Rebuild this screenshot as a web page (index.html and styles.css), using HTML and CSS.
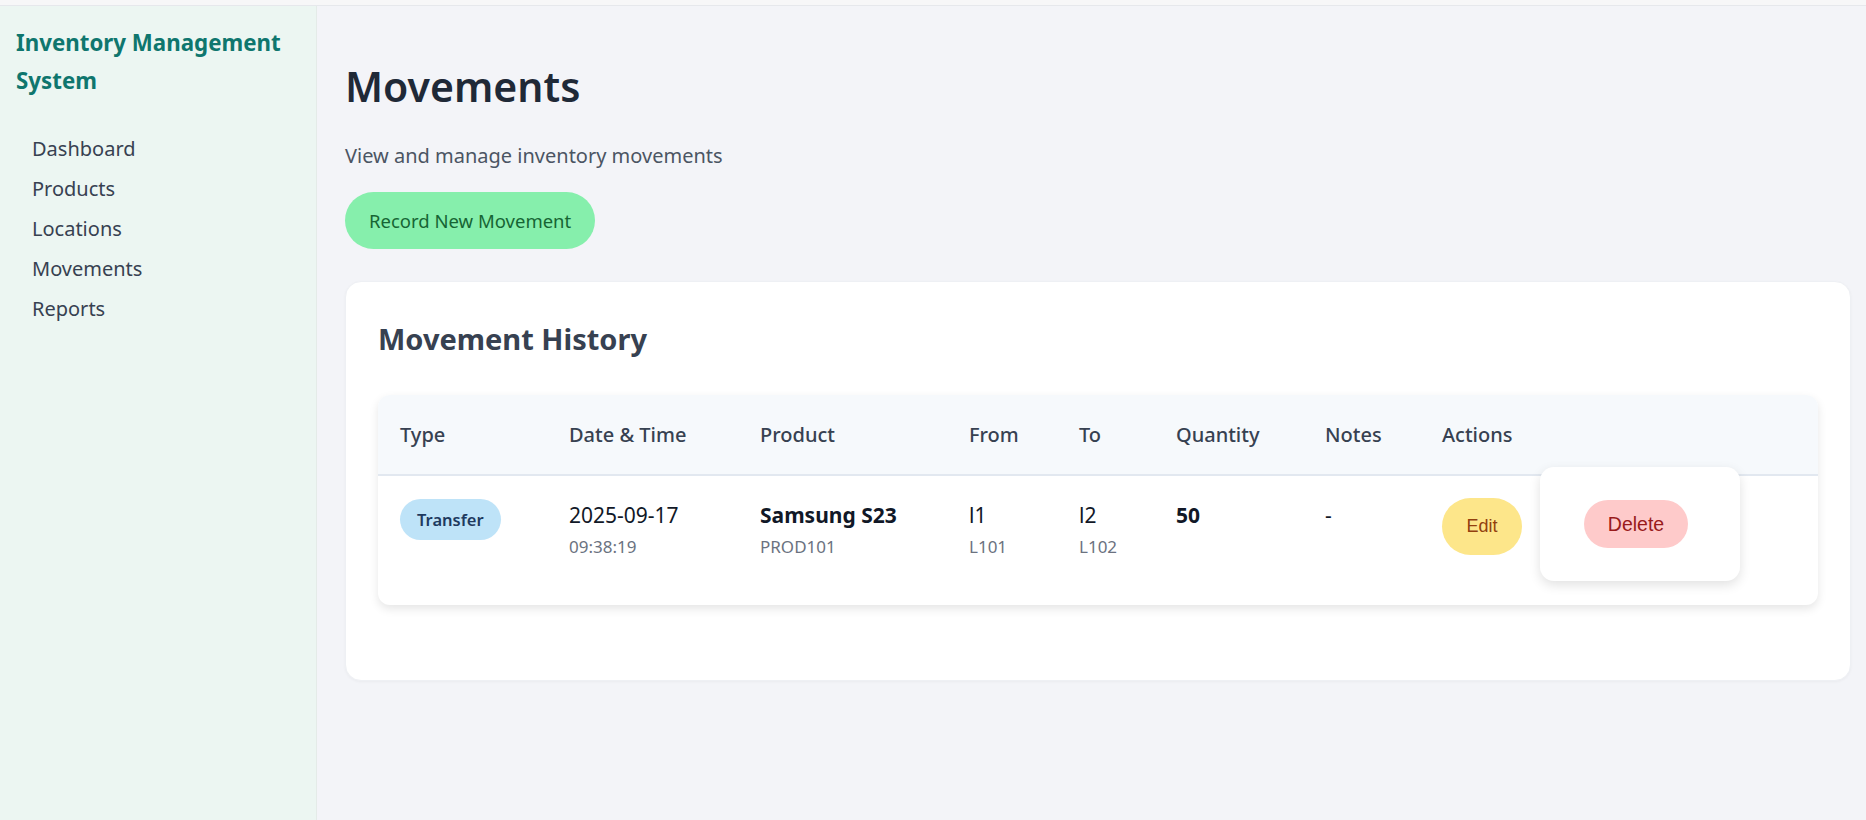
FILE: index.html
```html
<!DOCTYPE html>
<html lang="en">
<head>
<meta charset="utf-8">
<title>Movements - Inventory Management System</title>
<link rel="stylesheet" href="styles.css">
</head>
<body>
<div class="topbar"></div>
<div class="layout">
  <aside class="sidebar">
    <div class="brand">Inventory Management System</div>
    <nav class="nav">
      <a class="nav-link" href="#">Dashboard</a>
      <a class="nav-link" href="#">Products</a>
      <a class="nav-link" href="#">Locations</a>
      <a class="nav-link" href="#">Movements</a>
      <a class="nav-link" href="#">Reports</a>
    </nav>
  </aside>
  <main class="main">
    <h1 class="page-title">Movements</h1>
    <p class="page-sub">View and manage inventory movements</p>
    <button class="btn-record">Record New Movement</button>
    <section class="card">
      <h2 class="card-title">Movement History</h2>
      <div class="table-wrap">
        <table class="table">
          <colgroup>
            <col class="c-type"><col class="c-date"><col class="c-prod"><col class="c-from">
            <col class="c-to"><col class="c-qty"><col class="c-notes"><col class="c-actions">
          </colgroup>
          <thead>
            <tr>
              <th>Type</th><th>Date &amp; Time</th><th>Product</th><th>From</th>
              <th>To</th><th>Quantity</th><th>Notes</th><th>Actions</th>
            </tr>
          </thead>
          <tbody>
            <tr>
              <td><span class="badge">Transfer</span></td>
              <td><div class="main-val">2025-09-17</div><div class="sub-val">09:38:19</div></td>
              <td><div class="main-val strong">Samsung S23</div><div class="sub-val">PROD101</div></td>
              <td><div class="main-val">l1</div><div class="sub-val">L101</div></td>
              <td><div class="main-val">l2</div><div class="sub-val">L102</div></td>
              <td><div class="main-val strong">50</div></td>
              <td><div class="main-val">-</div></td>
              <td class="actions">
                <div class="actions-inner">
                  <button class="btn-edit">Edit</button>
                  <form class="delete-pop"><button type="button" class="btn-delete">Delete</button></form>
                </div>
              </td>
            </tr>
          </tbody>
        </table>
      </div>
    </section>
  </main>
</div>
</body>
</html>
```

FILE: styles.css
```css
* { box-sizing: border-box; }
html, body { margin: 0; padding: 0; }
body {
  font-family: "Noto Sans", "Open Sans", sans-serif;
  background: #f3f4f8;
  color: #1f2937;
  height: 820px;
  overflow: hidden;
}
.topbar {
  height: 6px;
  background: #f7f7f8;
  border-bottom: 1px solid #e6e8ec;
}
.layout {
  display: flex;
  height: 814px;
}
.sidebar {
  width: 317px;
  flex: none;
  background: #ecf6f2;
  border-right: 1px solid #e4ebe8;
  padding: 18px 16px;
}
.brand {
  font-size: 22.3px;
  font-weight: 700;
  line-height: 38px;
  color: #0f766e;
}
.nav {
  display: flex;
  flex-direction: column;
  margin-top: 29px;
  padding-left: 16px;
}
.nav-link {
  font-size: 20px;
  line-height: 40px;
  color: #374151;
  text-decoration: none;
}
.main {
  flex: 1;
  padding: 54px 15px 0 28px;
}
.page-title {
  margin: 0;
  font-size: 41px;
  font-weight: 600;
  line-height: 52px;
  color: #1f2937;
}
.page-sub {
  margin: 29px 0 0;
  font-size: 20px;
  line-height: 30px;
  color: #4b5563;
}
.btn-record {
  margin-top: 21px;
  height: 57px;
  padding: 0 24px;
  border: none;
  border-radius: 999px;
  background: #86efac;
  color: #166534;
  font-family: "Noto Sans", sans-serif;
  font-size: 18.5px;
}
.card {
  margin-top: 32px;
  background: #fff;
  border-radius: 16px;
  box-shadow: 0 1px 3px rgba(0,0,0,0.04);
  border: 1px solid #eef0f4;
  padding: 37px 32px 75px;
}
.card-title {
  margin: 0 0 36px;
  font-size: 29px;
  font-weight: 700;
  line-height: 40px;
  color: #374151;
}
.table-wrap {
  border-radius: 12px;
  background: #fff;
  box-shadow: 0 4px 10px rgba(0,0,0,0.10);
}
.table {
  width: 100%;
  border-collapse: collapse;
  table-layout: fixed;
}
.c-type { width: 169px; }
.c-date { width: 191px; }
.c-prod { width: 209px; }
.c-from { width: 110px; }
.c-to { width: 97px; }
.c-qty { width: 149px; }
.c-notes { width: 117px; }
.table thead tr {
  background: #f6f9fc;
}
.table thead th:first-child { border-top-left-radius: 12px; }
.table thead th:last-child { border-top-right-radius: 12px; }
.table th {
  height: 80px;
  text-align: left;
  padding: 0 22px;
  font-size: 20px;
  font-weight: 500;
  color: #374151;
  border-bottom: 2px solid #e2e8f0;
}
.table td {
  height: 130px;
  vertical-align: top;
  padding: 25px 22px 0;
}
.badge {
  display: inline-flex;
  align-items: center;
  justify-content: center;
  height: 41px;
  padding: 0 17px;
  border-radius: 999px;
  background: #bee3f8;
  color: #1e3a5f;
  font-size: 16.5px;
  font-weight: 600;
  margin-top: -2px;
}
.main-val {
  font-size: 21px;
  line-height: 28px;
  color: #111827;
}
.main-val.strong { font-weight: 700; }
.sub-val {
  margin-top: 6px;
  font-size: 17px;
  line-height: 24px;
  color: #6b7280;
}
.table td.actions { padding-top: 22px; }
.actions-inner {
  position: relative;
  display: flex;
  align-items: center;
  height: 57px;
}
.btn-edit {
  width: 80px;
  height: 57px;
  border: none;
  border-radius: 999px;
  background: #fde68a;
  color: #92400e;
  font-family: "Liberation Sans", Arial, sans-serif;
  font-size: 18px;
}
.delete-pop {
  position: absolute;
  left: 98px;
  top: -31px;
  width: 200px;
  height: 114px;
  margin: 0;
  background: #fff;
  border-radius: 14px;
  box-shadow: 0 4px 12px rgba(0,0,0,0.12);
  display: flex;
  align-items: center;
  justify-content: center;
  padding-right: 8px;
}
.btn-delete {
  width: 104px;
  height: 48px;
  border: none;
  border-radius: 999px;
  background: #fecaca;
  color: #991b1b;
  font-family: "Liberation Sans", Arial, sans-serif;
  font-size: 19.5px;
}
```
